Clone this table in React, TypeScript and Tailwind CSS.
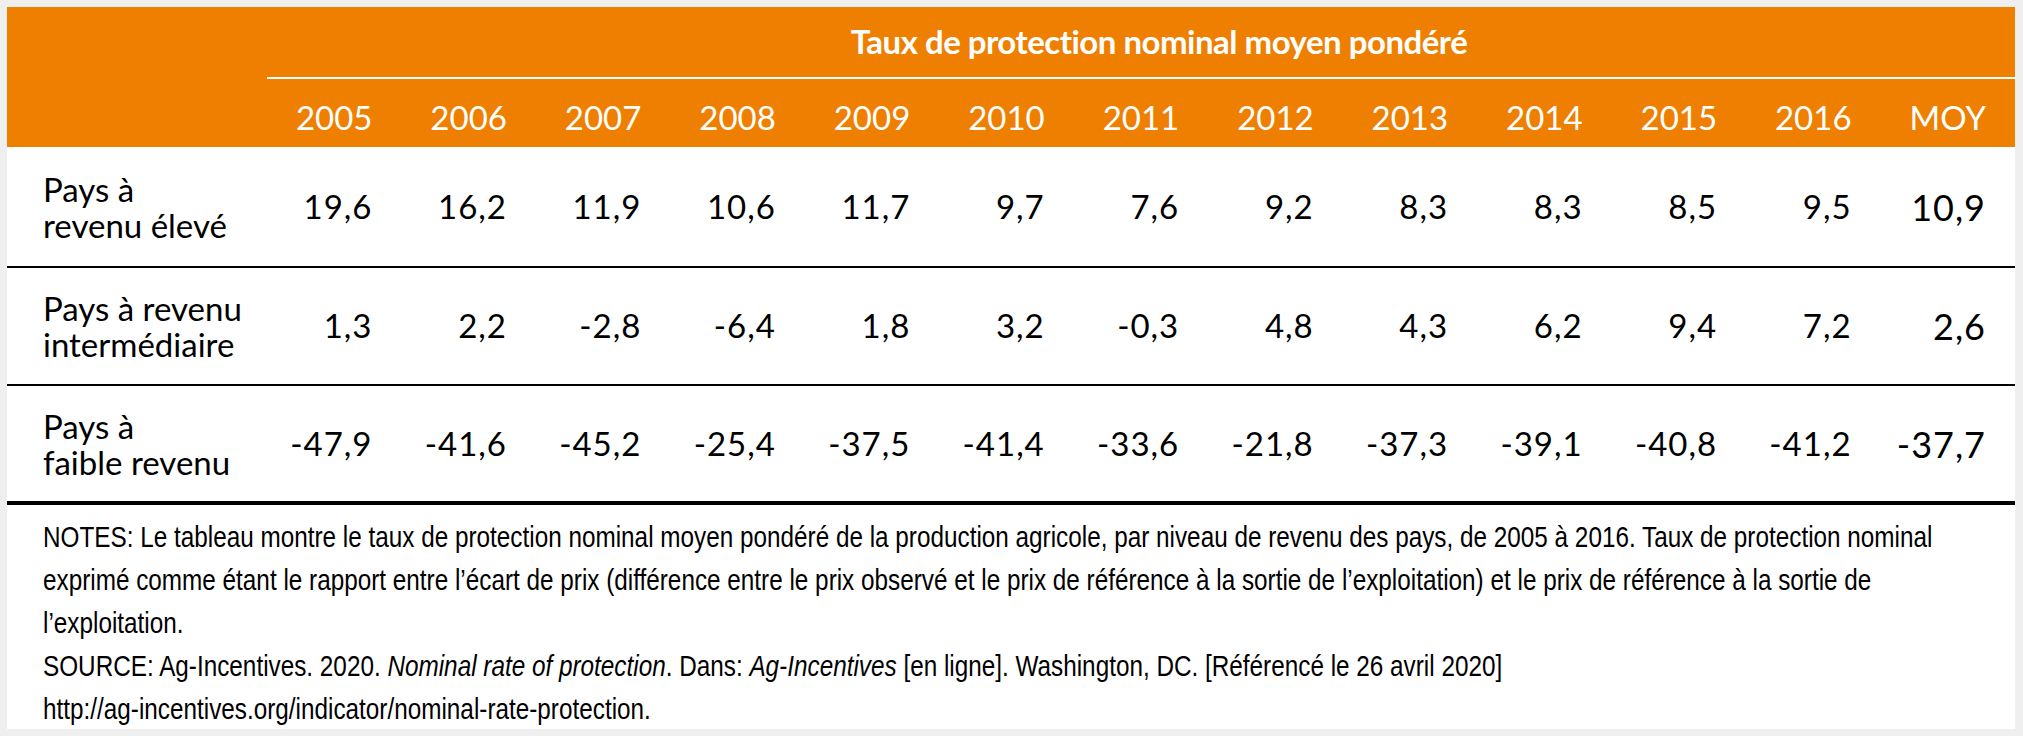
import React from 'react';

const years = ['2005', '2006', '2007', '2008', '2009', '2010', '2011', '2012', '2013', '2014', '2015', '2016', 'MOY'];

const rows = [
  {
    label: ['Pays à', 'revenu élevé'],
    values: ['19,6', '16,2', '11,9', '10,6', '11,7', '9,7', '7,6', '9,2', '8,3', '8,3', '8,5', '9,5', '10,9'],
  },
  {
    label: ['Pays à revenu', 'intermédiaire'],
    values: ['1,3', '2,2', '-2,8', '-6,4', '1,8', '3,2', '-0,3', '4,8', '4,3', '6,2', '9,4', '7,2', '2,6'],
  },
  {
    label: ['Pays à', 'faible revenu'],
    values: ['-47,9', '-41,6', '-45,2', '-25,4', '-37,5', '-41,4', '-33,6', '-21,8', '-37,3', '-39,1', '-40,8', '-41,2', '-37,7'],
  },
];

// hauteur de chaque ligne (bordure comprise)
const rowClass = ['h-[121px] border-b-2', 'h-[118px] border-b-2', 'h-[119px] border-b-4'];

const App = () => {
  return (
    <div className="min-h-screen w-full bg-[#efefef] pt-[7px] pl-[7px] font-['Lato','Noto_Sans',sans-serif]">
      <div className="w-[2008px] bg-white">
        {/* En-tête orange */}
        <div className="bg-[#ef7f00] text-white">
          <div className="grid grid-cols-[260px_1fr]">
            <div />
            <div className="h-[72px] flex items-center justify-center pl-[36px] border-b-2 border-white">
              <span className="text-[33px] font-bold tracking-[-0.5px]">Taux de protection nominal moyen pondéré</span>
            </div>
          </div>
          <div className="grid grid-cols-[260px_repeat(13,1fr)] h-[68px] items-center">
            <div />
            {years.map(y => (
              <div key={y} className="text-right pr-[29px] text-[33px] leading-none pt-[8px]">{y}</div>
            ))}
          </div>
        </div>

        {/* Lignes du tableau */}
        {rows.map((row, idx) => (
          <div
            key={idx}
            className={`grid grid-cols-[260px_repeat(13,1fr)] items-center text-black border-black ${rowClass[idx]}`}
          >
            <div className="pl-[36px] text-[33px] leading-[36px]">
              <div>{row.label[0]}</div>
              <div>{row.label[1]}</div>
            </div>
            {row.values.map((v, i) => (
              <div
                key={i}
                className={`text-right pr-[29px] tracking-[1px] ${i === 12 ? 'text-[36px]' : 'text-[33px]'}`}
              >
                {v}
              </div>
            ))}
          </div>
        ))}

        {/* Notes */}
        <div className="h-[224px] overflow-hidden pl-[36px] pt-[10px] text-black">
          <div className="origin-left scale-x-[0.81] whitespace-nowrap text-[30px] leading-[43px] font-['Liberation_Sans',sans-serif]">
            <div>NOTES: Le tableau montre le taux de protection nominal moyen pondéré de la production agricole, par niveau de revenu des pays, de 2005 à 2016. Taux de protection nominal</div>
            <div>exprimé comme étant le rapport entre l’écart de prix (différence entre le prix observé et le prix de référence à la sortie de l’exploitation) et le prix de référence à la sortie de</div>
            <div>l’exploitation.</div>
            <div>
              SOURCE: Ag-Incentives. 2020. <i>Nominal rate of protection</i>. Dans: <i>Ag-Incentives</i> [en ligne]. Washington, DC. [Référencé le 26 avril 2020]
            </div>
            <div>http://ag-incentives.org/indicator/nominal-rate-protection.</div>
          </div>
        </div>
      </div>
    </div>
  );
};

export default App;
